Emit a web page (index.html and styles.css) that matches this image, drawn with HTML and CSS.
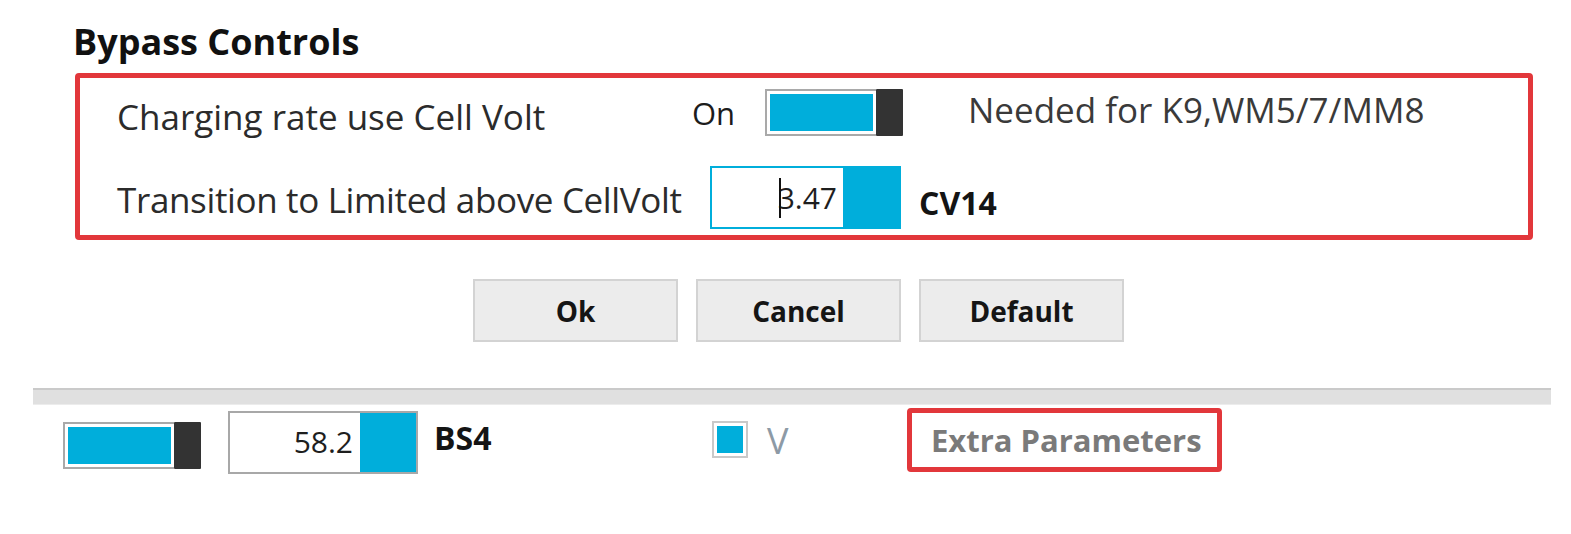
FILE: index.html
```html
<!DOCTYPE html>
<html lang="en">
<head>
<meta charset="utf-8">
<title>Bypass Controls</title>
<link rel="stylesheet" href="styles.css">
</head>
<body>
<div class="page">
  <h2 class="title">Bypass Controls</h2>

  <div class="group">
    <div class="row row-first">
      <span class="label label-first">Charging rate use Cell Volt</span>
      <span class="state">On</span>
      <div class="toggle">
        <span class="track"><span class="fill"></span></span>
        <span class="thumb"></span>
      </div>
      <span class="note">Needed for K9,WM5/7/MM8</span>
    </div>
    <div class="row row-second">
      <span class="label label-second">Transition to Limited above CellVolt</span>
      <div class="spin spin-focused">
        <span class="spin-value"><span class="caret"></span>3.47</span>
        <span class="spin-btn"></span>
      </div>
      <span class="code code-cv">CV14</span>
    </div>
  </div>

  <div class="buttons">
    <button class="btn" type="button">Ok</button>
    <button class="btn" type="button">Cancel</button>
    <button class="btn" type="button">Default</button>
  </div>

  <div class="separator"></div>

  <div class="bottom-row">
    <div class="toggle toggle-bottom">
      <span class="track"><span class="fill"></span></span>
      <span class="thumb"></span>
    </div>
    <div class="spin spin-plain">
      <span class="spin-value">58.2</span>
      <span class="spin-btn"></span>
    </div>
    <span class="code code-bs">BS4</span>
    <span class="checkbox"><span class="check-fill"></span></span>
    <span class="unit">V</span>
    <span class="extra">Extra Parameters</span>
  </div>
</div>
</body>
</html>
```

FILE: styles.css
```css
* {
  box-sizing: border-box;
}

body {
  margin: 0;
  background: #ffffff;
  font-family: "Open Sans", "Noto Sans", sans-serif;
  color: #2a2a2a;
}

.page {
  display: flex;
  flex-direction: column;
  align-items: flex-start;
}

.title {
  margin: 0 0 11px 73px;
  padding-top: 22px;
  font-size: 36px;
  line-height: 40px;
  font-weight: 700;
  color: #111111;
}

.group {
  margin-left: 75px;
  width: 1458px;
  height: 167px;
  border: 5px solid #e2373b;
  border-radius: 4px;
  padding: 11px 0 0 37px;
  display: flex;
  flex-direction: column;
}

.row {
  display: flex;
  align-items: center;
}

.row-first {
  height: 47px;
}

.row-second {
  height: 63px;
  margin-top: 30px;
}

.label {
  font-size: 35px;
  line-height: 48px;
  color: #2b2b2b;
  white-space: nowrap;
}

.label-first {
  width: 575px;
  margin-top: 8px;
}

.label-second {
  width: 593px;
  margin-top: 5px;
  letter-spacing: -0.35px;
}

.state {
  width: 73px;
  font-size: 31px;
  line-height: 42px;
  color: #1c1c1c;
}

.toggle {
  display: flex;
  width: 138px;
  height: 47px;
}

.track {
  width: 111px;
  height: 47px;
  border: 2px solid #a9a9a9;
  border-right: 0;
  padding: 3px;
  background: #ffffff;
  display: flex;
}

.fill {
  flex: 1;
  background: #00aedb;
}

.thumb {
  width: 27px;
  height: 47px;
  background: #333333;
  border-radius: 1px;
}

.note {
  margin-left: 65px;
  margin-bottom: 6px;
  font-size: 35px;
  line-height: 48px;
  color: #3a3a3a;
  white-space: nowrap;
}

.spin {
  display: flex;
  width: 191px;
  height: 63px;
  border: 2px solid #a8a8a8;
  background: #ffffff;
}

.spin-focused {
  border-color: #00aedb;
}

.spin-value {
  flex: 1;
  display: flex;
  align-items: center;
  justify-content: flex-end;
  padding-right: 6px;
  font-size: 30px;
  line-height: 40px;
  color: #1e1e1e;
}

.caret {
  display: inline-block;
  width: 2px;
  height: 40px;
  background: #111111;
  margin-right: -3px;
  position: relative;
  z-index: 1;
}

.spin-btn {
  width: 56px;
  background: #00aedb;
}

.code {
  font-size: 32px;
  line-height: 44px;
  font-weight: 700;
  color: #141414;
}

.code-cv {
  margin-left: 18px;
  margin-top: 10px;
}

.buttons {
  display: flex;
  gap: 18px;
  margin: 39px 0 0 473px;
}

.btn {
  width: 205px;
  height: 63px;
  background: #ececec;
  border: 2px solid #d3d3d3;
  border-radius: 0;
  font-family: "Open Sans", "Noto Sans", sans-serif;
  font-size: 28px;
  font-weight: 700;
  color: #151515;
  padding: 0;
}

.separator {
  margin: 46px 0 0 33px;
  width: 1518px;
  height: 17px;
  background: #e0e0e0;
  border-top: 2px solid #cacaca;
  border-bottom: 1px solid #ececec;
}

.bottom-row {
  display: flex;
  align-items: center;
  height: 66px;
  margin-top: 3px;
}

.toggle-bottom {
  margin-left: 63px;
  margin-top: 8px;
  width: 139px;
}

.spin-plain {
  margin-left: 26px;
  width: 190px;
  margin-top: 2px;
}

.spin-plain .spin-value {
  padding-right: 7px;
}

.code-bs {
  margin-left: 16px;
  width: 278px;
  margin-top: -6px;
}

.checkbox {
  width: 36px;
  height: 37px;
  border: 2px solid #c9c9c9;
  padding: 3px;
  display: flex;
  margin-top: -4px;
}

.check-fill {
  flex: 1;
  background: #00aedb;
}

.unit {
  margin-left: 19px;
  width: 140px;
  font-size: 36px;
  line-height: 48px;
  color: #8d9aa6;
}

.extra {
  width: 315px;
  height: 64px;
  border: 5px solid #e2373b;
  border-radius: 4px;
  padding-left: 19px;
  display: flex;
  align-items: center;
  font-size: 31px;
  font-weight: 700;
  color: #7a7a7a;
  white-space: nowrap;
  margin-top: -2px;
}
```
